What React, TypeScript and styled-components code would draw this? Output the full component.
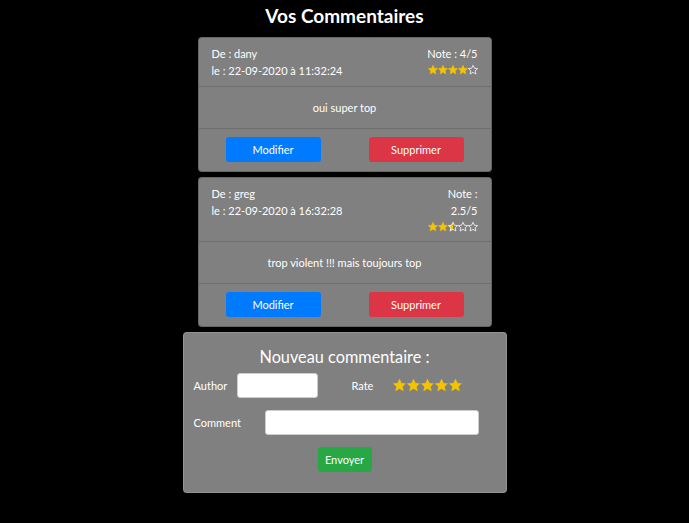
import React from "react";
import styled, { createGlobalStyle } from "styled-components";

const Global = createGlobalStyle`
  html, body { margin: 0; padding: 0; background: #000; }
  body { font-family: "Lato", "Open Sans", sans-serif; color: #fff; }
`;

const Page = styled.div`
  display: flex;
  flex-direction: column;
  align-items: center;
  padding-top: 3px;
`;

const Title = styled.h1`
  margin: 0 0 9px;
  font-size: 19px;
  line-height: 25px;
  font-weight: 700;
`;

const Card = styled.div`
  width: 294px;
  background: #808080;
  border: 1px solid rgba(0, 0, 0, 0.2);
  border-radius: 4px;
  margin-bottom: 5px;
  box-sizing: border-box;
  font-size: 11px;
`;

const Header = styled.div`
  display: flex;
  justify-content: space-between;
  padding: 7px 13px;
  line-height: 17px;
  border-bottom: 1px solid rgba(0, 0, 0, 0.13);
`;

const Col = styled.div<{ $right?: boolean }>`
  display: flex;
  flex-direction: column;
  align-items: ${(p) => (p.$right ? "flex-end" : "flex-start")};
  text-align: ${(p) => (p.$right ? "right" : "left")};
  max-width: ${(p) => (p.$right ? "52px" : "none")};
`;

const Body = styled.div`
  padding: 12px 0;
  text-align: center;
  line-height: 17px;
  border-bottom: 1px solid rgba(0, 0, 0, 0.13);
`;

const Footer = styled.div`
  display: flex;
  justify-content: space-between;
  padding: 8px 27px 9px;
`;

const Btn = styled.button<{ $color: string; $w?: number }>`
  width: ${(p) => p.$w ?? 95}px;
  height: 25px;
  border: none;
  border-radius: 3px;
  background: ${(p) => p.$color};
  color: #fff;
  font-family: inherit;
  font-size: 11px;
  padding: 0;
`;

const StarRow = styled.div<{ $gap: number; $h: number }>`
  display: flex;
  gap: ${(p) => p.$gap}px;
  height: ${(p) => p.$h}px;
  align-items: center;
`;

const Form = styled.div`
  width: 324px;
  box-sizing: border-box;
  background: #808080;
  border: 1px solid rgba(255, 255, 255, 0.15);
  border-radius: 4px;
  padding: 12px 10px 20px;
  font-size: 11px;
  display: flex;
  flex-direction: column;
`;

const FormTitle = styled.div`
  text-align: center;
  font-size: 16.3px;
  line-height: 24px;
  margin-bottom: 4px;
`;

const Row = styled.div`
  display: flex;
  align-items: center;
  margin-bottom: 12px;
`;

const Label = styled.label<{ $w: number }>`
  width: ${(p) => p.$w}px;
  flex: none;
`;

const Input = styled.input<{ $w: number }>`
  width: ${(p) => p.$w}px;
  height: 25px;
  box-sizing: border-box;
  border: 1px solid #ccc;
  border-radius: 3px;
  background: #fff;
  margin: 0;
`;

const Spacer = styled.div<{ $w: number }>`
  width: ${(p) => p.$w}px;
  flex: none;
`;

const Center = styled.div`
  display: flex;
  justify-content: center;
`;

const STAR = "M12 2l2.9 6.3 6.9.7-5.2 4.6 1.5 6.8L12 16.9 5.9 20.4l1.5-6.8L2.2 9l6.9-.7z";

function Star({ fill, size, id }: { fill: number; size: number; id: string }) {
  return (
    <svg width={size} height={size} viewBox="1.5 1.5 21 21">
      <defs>
        <linearGradient id={id} x1="0.1" x2="0.9">
          <stop offset={`${fill * 100}%`} stopColor="#f5c400" />
          <stop offset={`${fill * 100}%`} stopColor="transparent" />
        </linearGradient>
      </defs>
      <path
        d={STAR}
        fill={`url(#${id})`}
        stroke={fill >= 1 ? "#f5c400" : "#fff"}
        strokeWidth={fill >= 1 ? 1 : 1.6}
        strokeLinejoin="round"
      />
    </svg>
  );
}

function Stars({ value, prefix }: { value: number; prefix: string }) {
  return (
    <StarRow $gap={0} $h={15}>
      {[0, 1, 2, 3, 4].map((i) => (
        <Star key={i} id={`${prefix}${i}`} size={10} fill={Math.max(0, Math.min(1, value - i))} />
      ))}
    </StarRow>
  );
}

type C = { author: string; date: string; rate: number; text: string };

const comments: C[] = [
  { author: "dany", date: "22-09-2020 à 11:32:24", rate: 4, text: "oui super top" },
  { author: "greg", date: "22-09-2020 à 16:32:28", rate: 2.5, text: "trop violent !!! mais toujours top" },
];

export default function App() {
  return (
    <Page>
      <Global />
      <Title>Vos Commentaires</Title>
      {comments.map((c, k) => (
        <Card key={k}>
          <Header>
            <Col>
              <div>De : {c.author}</div>
              <div>le : {c.date}</div>
            </Col>
            <Col $right>
              <div>Note : {c.rate}/5</div>
              <Stars value={c.rate} prefix={`s${k}`} />
            </Col>
          </Header>
          <Body>{c.text}</Body>
          <Footer>
            <Btn $color="#007bff">Modifier</Btn>
            <Btn $color="#dc3545">Supprimer</Btn>
          </Footer>
        </Card>
      ))}
      <Form>
        <FormTitle>Nouveau commentaire :</FormTitle>
        <Row>
          <Label $w={43}>Author</Label>
          <Input $w={81} />
          <Spacer $w={34} />
          <Label $w={41}>Rate</Label>
          <StarRow $gap={1} $h={14}>
            {[0, 1, 2, 3, 4].map((i) => (
              <Star key={i} id={`f${i}`} size={13} fill={1} />
            ))}
          </StarRow>
        </Row>
        <Row>
          <Label $w={71}>Comment</Label>
          <Input $w={214} />
        </Row>
        <Center>
          <Btn $color="#28a745" $w={54}>Envoyer</Btn>
        </Center>
      </Form>
    </Page>
  );
}
